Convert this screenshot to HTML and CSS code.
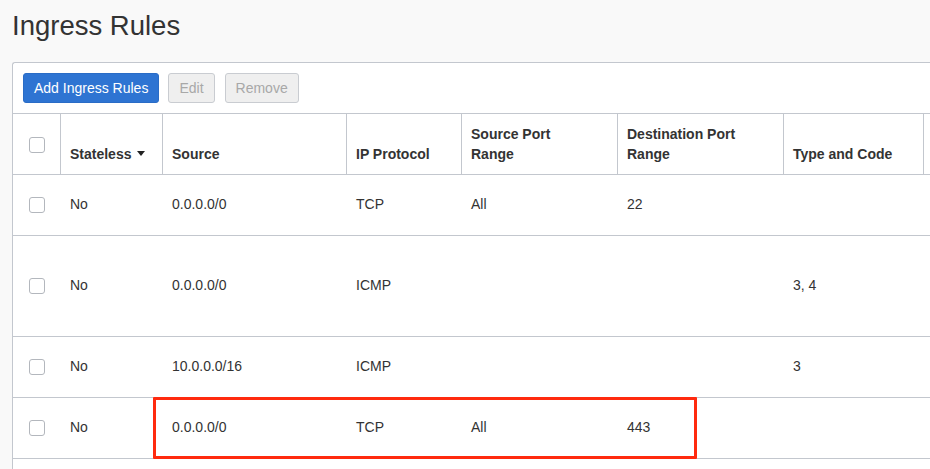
FILE: index.html
```html
<!DOCTYPE html>
<html lang="en">
<head>
<meta charset="utf-8">
<title>Ingress Rules</title>
<link rel="stylesheet" href="styles.css">
</head>
<body>
  <h1 class="title">Ingress Rules</h1>
  <section class="panel">
    <div class="toolbar">
      <button class="btn btn-primary" type="button">Add Ingress Rules</button>
      <button class="btn btn-disabled" type="button" disabled>Edit</button>
      <button class="btn btn-disabled" type="button" disabled>Remove</button>
    </div>
    <table class="rules">
      <colgroup>
        <col class="c-check">
        <col class="c-stateless">
        <col class="c-source">
        <col class="c-proto">
        <col class="c-sport">
        <col class="c-dport">
        <col class="c-type">
        <col class="c-desc">
      </colgroup>
      <thead>
        <tr>
          <th class="th-check"><span class="checkbox"></span></th>
          <th class="th-line">Stateless<span class="caret"></span></th>
          <th class="th-line">Source</th>
          <th class="th-line">IP Protocol</th>
          <th class="th-line">Source Port<br>Range</th>
          <th class="th-line">Destination Port<br>Range</th>
          <th class="th-line">Type and Code</th>
          <th class="th-line"></th>
        </tr>
      </thead>
      <tbody>
        <tr>
          <td class="td-check"><span class="checkbox"></span></td>
          <td>No</td>
          <td>0.0.0.0/0</td>
          <td>TCP</td>
          <td>All</td>
          <td>22</td>
          <td></td>
          <td></td>
        </tr>
        <tr class="tall">
          <td class="td-check"><span class="checkbox"></span></td>
          <td>No</td>
          <td>0.0.0.0/0</td>
          <td>ICMP</td>
          <td></td>
          <td></td>
          <td>3, 4</td>
          <td></td>
        </tr>
        <tr>
          <td class="td-check"><span class="checkbox"></span></td>
          <td>No</td>
          <td>10.0.0.0/16</td>
          <td>ICMP</td>
          <td></td>
          <td></td>
          <td>3</td>
          <td></td>
        </tr>
        <tr>
          <td class="td-check"><span class="checkbox"></span></td>
          <td>No</td>
          <td>0.0.0.0/0</td>
          <td>TCP</td>
          <td>All</td>
          <td>443</td>
          <td></td>
          <td></td>
        </tr>
      </tbody>
    </table>
    <div class="highlight"></div>
  </section>
</body>
</html>
```

FILE: styles.css
```css
html, body {
  margin: 0;
  padding: 0;
}

body {
  background: #f9f9f9;
  font-family: "Liberation Sans", Arial, Helvetica, sans-serif;
  color: #333;
  overflow: hidden;
  width: 930px;
  height: 469px;
  padding-left: 12px;
  box-sizing: border-box;
}

.title {
  margin: 0;
  padding-top: 10px;
  height: 32px;
  font-size: 27.5px;
  line-height: 32px;
  font-weight: 400;
  color: #333;
  margin-bottom: 20px;
}

.panel {
  position: relative;
  width: 1100px;
  padding-bottom: 40px;
  background: #fff;
  border-left: 1px solid #c3c7ce;
  border-top: 1px solid #c3c7ce;
  border-top-left-radius: 3px;
}

.toolbar {
  display: flex;
  gap: 9px;
  padding: 10px;
}

.btn {
  height: 30px;
  padding: 0 10px;
  font-family: inherit;
  font-size: 14px;
  border-radius: 3px;
  border: 1px solid transparent;
  box-sizing: border-box;
  line-height: 28px;
}

.btn-primary {
  background: #2e74d2;
  border-color: #2a6cc6;
  color: #fff;
}

.btn-disabled {
  background: #efefef;
  border-color: #c9ccd1;
  color: #a8a8a8;
}

.btn-disabled + .btn-disabled {
  margin-left: 1px;
}

.rules {
  table-layout: fixed;
  border-collapse: separate;
  border-spacing: 0;
  width: 1087px;
  border-top: 1px solid #c3c7ce;
  font-size: 14px;
}

.c-check { width: 47px; }
.c-stateless { width: 102px; }
.c-source { width: 184px; }
.c-proto { width: 115px; }
.c-sport { width: 156px; }
.c-dport { width: 166px; }
.c-type { width: 140px; }
.c-desc { width: 177px; }

.rules th {
  text-align: left;
  font-weight: 700;
  line-height: 20px;
  padding: 10px 10px 10px 9px;
  vertical-align: bottom;
  border-bottom: 1px solid #c3c7ce;
  color: #333;
}

.rules .th-line {
  border-left: 1px solid #c3c7ce;
}

.rules .th-check {
  padding: 0;
  text-align: center;
  vertical-align: middle;
}

.rules td {
  line-height: 20px;
  padding: 19px 10px 21px 10px;
  border-bottom: 1px solid #c3c7ce;
  vertical-align: middle;
  white-space: nowrap;
}

.rules tr.tall td {
  padding-top: 39px;
  padding-bottom: 41px;
}

.rules .td-check {
  padding-left: 0;
  padding-right: 0;
  text-align: center;
}

.checkbox {
  display: inline-block;
  width: 16px;
  height: 16px;
  box-sizing: border-box;
  border: 1px solid #b3b7bd;
  border-radius: 3px;
  background: #fff;
  vertical-align: middle;
}

.caret {
  display: inline-block;
  width: 0;
  height: 0;
  margin-left: 6px;
  border-left: 4px solid transparent;
  border-right: 4px solid transparent;
  border-top: 5px solid #222;
  vertical-align: 3px;
}

.highlight {
  position: absolute;
  left: 140px;
  top: 334px;
  width: 544px;
  height: 62px;
  box-sizing: border-box;
  border: 3px solid #ff2a0f;
  border-radius: 1px;
  pointer-events: none;
}
```
